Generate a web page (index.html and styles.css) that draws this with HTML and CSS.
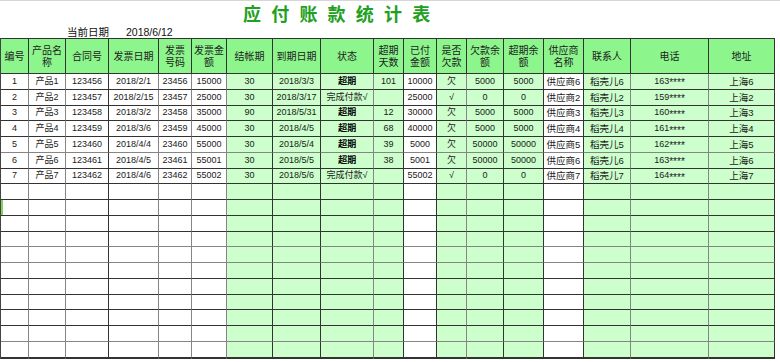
FILE: index.html
```html
<!DOCTYPE html>
<html lang="zh-CN">
<head>
<meta charset="utf-8">
<title>应付账款统计表</title>
<link rel="stylesheet" href="styles.css">
</head>
<body>
<div class="sheet">
  <div class="top">
    <h1 class="title">应付账款统计表</h1>
    <div class="date-line"><span class="date-label">当前日期</span><span class="date-value">2018/6/12</span></div>
  </div>
  <div class="grid">
    <div class="row head">
      <div>编号</div><div>产品名称</div><div>合同号</div><div>发票日期</div><div>发票号码</div><div>发票金额</div><div>结帐期</div><div>到期日期</div><div>状态</div><div>超期天数</div><div>已付金额</div><div>是否欠款</div><div>欠款余额</div><div>超期余额</div><div>供应商名称</div><div>联系人</div><div>电话</div><div>地址</div>
    </div>
    <div class="row">
      <div>1</div><div class="sm">产品1</div><div>123456</div><div>2018/2/1</div><div>23456</div><div>15000</div><div>30</div><div>2018/3/3</div><div class="st">超期</div><div>101</div><div>10000</div><div>欠</div><div>5000</div><div>5000</div><div>供应商6</div><div>稻壳儿6</div><div>163<span class="ast">****</span></div><div>上海6</div>
    </div>
    <div class="row">
      <div>2</div><div class="sm">产品2</div><div>123457</div><div>2018/2/15</div><div>23457</div><div>25000</div><div>30</div><div>2018/3/17</div><div>完成付款√</div><div></div><div>25000</div><div>√</div><div>0</div><div>0</div><div>供应商2</div><div>稻壳儿2</div><div>159<span class="ast">****</span></div><div>上海2</div>
    </div>
    <div class="row">
      <div>3</div><div class="sm">产品3</div><div>123458</div><div>2018/3/2</div><div>23458</div><div>35000</div><div>90</div><div>2018/5/31</div><div class="st">超期</div><div>12</div><div>30000</div><div>欠</div><div>5000</div><div>5000</div><div>供应商3</div><div>稻壳儿3</div><div>160<span class="ast">****</span></div><div>上海3</div>
    </div>
    <div class="row">
      <div>4</div><div class="sm">产品4</div><div>123459</div><div>2018/3/6</div><div>23459</div><div>45000</div><div>30</div><div>2018/4/5</div><div class="st">超期</div><div>68</div><div>40000</div><div>欠</div><div>5000</div><div>5000</div><div>供应商4</div><div>稻壳儿4</div><div>161<span class="ast">****</span></div><div>上海4</div>
    </div>
    <div class="row gray">
      <div>5</div><div class="sm">产品5</div><div>123460</div><div>2018/4/4</div><div>23460</div><div>55000</div><div>30</div><div>2018/5/4</div><div class="st">超期</div><div>39</div><div>5000</div><div>欠</div><div>50000</div><div>50000</div><div>供应商5</div><div>稻壳儿5</div><div>162<span class="ast">****</span></div><div>上海5</div>
    </div>
    <div class="row">
      <div>6</div><div class="sm">产品6</div><div>123461</div><div>2018/4/5</div><div>23461</div><div>55001</div><div>30</div><div>2018/5/5</div><div class="st">超期</div><div>38</div><div>5001</div><div>欠</div><div>50000</div><div>50000</div><div>供应商6</div><div>稻壳儿6</div><div>163<span class="ast">****</span></div><div>上海6</div>
    </div>
    <div class="row">
      <div>7</div><div class="sm">产品7</div><div>123462</div><div>2018/4/6</div><div>23462</div><div>55002</div><div>30</div><div>2018/5/6</div><div>完成付款√</div><div></div><div>55002</div><div>√</div><div>0</div><div>0</div><div>供应商7</div><div>稻壳儿7</div><div>164<span class="ast">****</span></div><div>上海7</div>
    </div>
    <div class="row"><div></div><div></div><div></div><div></div><div></div><div></div><div></div><div></div><div></div><div></div><div></div><div></div><div></div><div></div><div></div><div></div><div></div><div></div></div>
    <div class="row"><div class="mark"></div><div></div><div></div><div></div><div></div><div></div><div></div><div></div><div></div><div></div><div></div><div></div><div></div><div></div><div></div><div></div><div></div><div></div></div>
    <div class="row"><div></div><div></div><div></div><div></div><div></div><div></div><div></div><div></div><div></div><div></div><div></div><div></div><div></div><div></div><div></div><div></div><div></div><div></div></div>
    <div class="row gray"><div></div><div></div><div></div><div></div><div></div><div></div><div></div><div></div><div></div><div></div><div></div><div></div><div></div><div></div><div></div><div></div><div></div><div></div></div>
    <div class="row gray"><div></div><div></div><div></div><div></div><div></div><div></div><div></div><div></div><div></div><div></div><div></div><div></div><div></div><div></div><div></div><div></div><div></div><div></div></div>
    <div class="row"><div></div><div></div><div></div><div></div><div></div><div></div><div></div><div></div><div></div><div></div><div></div><div></div><div></div><div></div><div></div><div></div><div></div><div></div></div>
    <div class="row"><div></div><div></div><div></div><div></div><div></div><div></div><div></div><div></div><div></div><div></div><div></div><div></div><div></div><div></div><div></div><div></div><div></div><div></div></div>
    <div class="row"><div></div><div></div><div></div><div></div><div></div><div></div><div></div><div></div><div></div><div></div><div></div><div></div><div></div><div></div><div></div><div></div><div></div><div></div></div>
    <div class="row"><div></div><div></div><div></div><div></div><div></div><div></div><div></div><div></div><div></div><div></div><div></div><div></div><div></div><div></div><div></div><div></div><div></div><div></div></div>
    <div class="row gray"><div></div><div></div><div></div><div></div><div></div><div></div><div></div><div></div><div></div><div></div><div></div><div></div><div></div><div></div><div></div><div></div><div></div><div></div></div>
    <div class="row"><div></div><div></div><div></div><div></div><div></div><div></div><div></div><div></div><div></div><div></div><div></div><div></div><div></div><div></div><div></div><div></div><div></div><div></div></div>
    <div class="row"><div></div><div></div><div></div><div></div><div></div><div></div><div></div><div></div><div></div><div></div><div></div><div></div><div></div><div></div><div></div><div></div><div></div><div></div></div>
  </div>
</div>
</body>
</html>
```
FILE: styles.css
```css
* { box-sizing: border-box; }
html, body { margin: 0; padding: 0; background: #ffffff; }
body {
  font-family: "Liberation Sans", "Noto Sans CJK SC", sans-serif;
  color: #1a1a1a;
  width: 780px;
  height: 362px;
  overflow: hidden;
}
.sheet {
  border-top: 1px solid #d6d6d6;
}
.top {
  height: 37px;
  display: flex;
  flex-direction: column;
}
.title {
  margin: 0;
  padding: 2px 0 0 243px;
  font-family: "Noto Sans CJK SC", sans-serif;
  font-size: 18px;
  line-height: 20px;
  font-weight: 700;
  letter-spacing: 10.2px;
  color: #22a022;
}
.date-line {
  display: flex;
  padding-left: 67px;
  margin-top: 3px;
  font-size: 10.5px;
  line-height: 12px;
  color: #111;
}
.date-label { font-family: "Noto Sans CJK SC", sans-serif; width: 59px; }
.grid {
  display: grid;
  width: 775px;
  grid-template-columns: 28px 37px 43px 50px 33px 35px 46px 48px 53px 30px 33px 30px 37px 40px 40px 47px 78px 66px;
  grid-template-rows: 35px repeat(18, 15.78px);
  border-left: 1px solid #444;
  border-top: 1px solid #333;
}
.row { display: contents; }
.row > div {
  border-right: 1px solid #333;
  border-bottom: 1px solid #333;
  display: flex;
  align-items: center;
  justify-content: center;
  text-align: center;
  font-size: 9px;
  line-height: 11px;
  white-space: nowrap;
  overflow: hidden;
  background: #ccffcc;
}
.row > div:nth-child(-n+6),
.row > div:nth-child(11),
.row > div:nth-child(15) { background: #ffffff; }
.row > div:nth-child(1),
.row > div:nth-child(2),
.row > div:nth-child(4),
.row > div:nth-child(5),
.row > div:nth-child(6),
.row > div:nth-child(9),
.row > div:nth-child(12),
.row > div:nth-child(16),
.row > div:nth-child(17) { border-right-color: #858585; }
.row.gray > div { border-bottom-color: #858585; }
.row > div.sm { font-size: 9px; }
.row > div.st { font-size: 9px; color: #000; text-shadow: 0.3px 0 0 #000; }
.row > div:nth-child(15), .row > div:nth-child(16), .row > div:nth-child(18) { font-size: 9.5px; }
.ast { font-size: 10px; position: relative; top: 1.5px; }
.row > div.mark { box-shadow: inset 2px 0 0 #7ed35a; }
.row.head > div {
  background: #8cf58c;
  border-right-color: #333;
  border-bottom-color: #333;
  font-family: "Noto Sans CJK SC", sans-serif;
  font-size: 10px;
  line-height: 12px;
  white-space: normal;
  padding: 0 2px;
  color: #222;
}
```
